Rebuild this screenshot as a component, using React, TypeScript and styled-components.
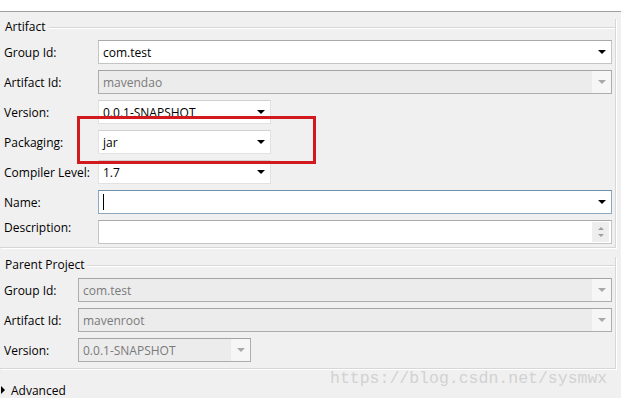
import React from 'react';
import styled, { createGlobalStyle, css } from 'styled-components';

const GlobalStyle = createGlobalStyle`
    html, body {
        margin: 0;
        padding: 0;
        background: #f0f0f0;
    }
    body {
        font-family: 'Open Sans', 'Noto Sans CJK SC', sans-serif;
        font-size: 12px;
        color: #000;
    }
`;

const Page = styled.div`
    position: relative;
    width: 621px;
    height: 398px;
    overflow: hidden;
    background: #f0f0f0;
`;

const TopStrip = styled.div`
    height: 11px;
    background: #fff;
    border-bottom: 1px solid #a0a0a0;
`;

const Group = styled.div<{ top: number; bottom: number }>`
    margin: ${(p) => p.top}px 5px 0 0;
    padding: 0 3px ${(p) => p.bottom}px 0;
    border-right: 1px solid #d7d7d7;
    border-bottom: 1px solid #d7d7d7;
    box-shadow: 1px 1px 0 #fff;
`;

const GroupTitle = styled.div`
    display: flex;
    align-items: center;
    height: 16px;
    padding-left: 5px;
    margin-right: -3px;
    line-height: 16px;
    &::after {
        content: '';
        flex: 1;
        margin-left: 3px;
        border-top: 1px solid #d7d7d7;
        box-shadow: 0 1px 0 #fff;
    }
`;

const Rows = styled.div<{ label: number }>`
    display: grid;
    grid-template-columns: ${(p) => p.label}px 1fr;
    grid-auto-rows: 24px;
    row-gap: 6px;
    padding-top: 5px;
    align-items: center;
`;

const Label = styled.div<{ top?: boolean }>`
    padding-left: 4px;
    white-space: nowrap;
    ${(p) =>
        p.top &&
        css`
            align-self: start;
            line-height: 16px;
        `}
`;

const Field = styled.div<{ short?: boolean; disabled?: boolean; focused?: boolean }>`
    position: relative;
    box-sizing: border-box;
    display: flex;
    align-items: center;
    height: 24px;
    width: ${(p) => (p.short ? '173px' : '100%')};
    padding-left: 4px;
    background: #fff;
    border: 1px solid #c4c4c4;
    border-top-color: #a9a9a9;
    color: #000;
    ${(p) =>
        p.short &&
        css`
            border-color: #e2e2e2;
            border-top-color: #d0d0d0;
        `}
    ${(p) =>
        p.disabled &&
        css`
            background: #ececec;
            border-color: #adadad;
            border-top-color: #a4a4a4;
            color: #7a7a7a;
        `}
    ${(p) =>
        p.focused &&
        css`
            border-color: #8aa8bf;
            border-top-color: #6f8fa8;
        `}
`;

const Value = styled.span`
    flex: 1;
    display: flex;
    align-items: center;
    white-space: nowrap;
`;

const ArrowBox = styled.div<{ disabled?: boolean }>`
    display: flex;
    align-items: center;
    justify-content: center;
    width: 19px;
    align-self: stretch;
    background: ${(p) => (p.disabled ? '#f6f6f6' : 'transparent')};
`;

const Arrow = styled.div<{ disabled?: boolean }>`
    width: 0;
    height: 0;
    border-left: 4px solid transparent;
    border-right: 4px solid transparent;
    border-top: 4px solid ${(p) => (p.disabled ? '#a8a8a8' : '#000')};
`;

const Spinner = styled.div`
    display: flex;
    flex-direction: column;
    align-items: center;
    justify-content: center;
    gap: 4px;
    width: 17px;
    align-self: stretch;
    margin: 1px 2px 1px 0;
    background: #eeeeee;
`;

const SmallArrow = styled.div<{ up?: boolean }>`
    width: 0;
    height: 0;
    border-left: 3px solid transparent;
    border-right: 3px solid transparent;
    ${(p) =>
        p.up
            ? css`
                  border-bottom: 3px solid #a0a0a0;
              `
            : css`
                  border-top: 3px solid #a0a0a0;
              `}
`;

const Caret = styled.span`
    display: inline-block;
    width: 1px;
    height: 16px;
    background: #000;
`;

const Advanced = styled.div`
    display: flex;
    align-items: center;
    gap: 6px;
    height: 16px;
    margin-top: 13px;
    padding-left: 1px;
    &::before {
        content: '';
        border-top: 4px solid transparent;
        border-bottom: 4px solid transparent;
        border-left: 4px solid #000;
    }
`;

const Highlight = styled.div`
    position: absolute;
    left: 77px;
    top: 116px;
    width: 239px;
    height: 48px;
    box-sizing: border-box;
    border: 3px solid #d2191e;
    pointer-events: none;
`;

const Watermark = styled.div`
    position: absolute;
    left: 330px;
    top: 369px;
    font-family: 'Liberation Mono', 'DejaVu Sans Mono', monospace;
    font-size: 16.5px;
    line-height: 20px;
    color: #d2d2d2;
    white-space: nowrap;
`;

type ComboProps = {
    value?: string;
    short?: boolean;
    disabled?: boolean;
};

function Combo({ value, short, disabled }: ComboProps) {
    return (
        <Field short={short} disabled={disabled}>
            <Value>{value}</Value>
            <ArrowBox disabled={disabled}>
                <Arrow disabled={disabled} />
            </ArrowBox>
        </Field>
    );
}

export default function App() {
    return (
        <Page>
            <GlobalStyle />
            <TopStrip />
            <Group top={7} bottom={3}>
                <GroupTitle>Artifact</GroupTitle>
                <Rows label={98}>
                    <Label>Group Id:</Label>
                    <Combo value="com.test" />
                    <Label>Artifact Id:</Label>
                    <Combo value="mavendao" disabled />
                    <Label>Version:</Label>
                    <Combo value="0.0.1-SNAPSHOT" short />
                    <Label>Packaging:</Label>
                    <Combo value="jar" short />
                    <Label>Compiler Level:</Label>
                    <Combo value="1.7" short />
                    <Label>Name:</Label>
                    <Field focused>
                        <Value>
                            <Caret />
                        </Value>
                        <ArrowBox>
                            <Arrow />
                        </ArrowBox>
                    </Field>
                    <Label top>Description:</Label>
                    <Field>
                        <Value />
                        <Spinner>
                            <SmallArrow up />
                            <SmallArrow />
                        </Spinner>
                    </Field>
                </Rows>
            </Group>
            <Group top={9} bottom={6}>
                <GroupTitle>Parent Project</GroupTitle>
                <Rows label={78}>
                    <Label>Group Id:</Label>
                    <Combo value="com.test" disabled />
                    <Label>Artifact Id:</Label>
                    <Combo value="mavenroot" disabled />
                    <Label>Version:</Label>
                    <Combo value="0.0.1-SNAPSHOT" short disabled />
                </Rows>
            </Group>
            <Advanced>Advanced</Advanced>
            <Highlight />
            <Watermark>https://blog.csdn.net/sysmwx</Watermark>
        </Page>
    );
}
